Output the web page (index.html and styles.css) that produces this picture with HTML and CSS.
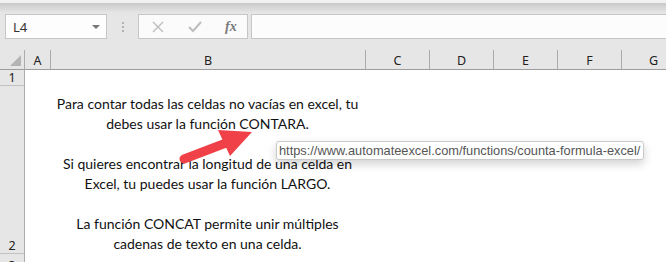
FILE: index.html
```html
<!DOCTYPE html>
<html lang="es">
<head>
    <meta charset="UTF-8">
    <title>Excel - hipervínculo</title>
    <link rel="stylesheet" href="styles.css">
</head>
<body>
    <div class="app">
        <div class="top-strip"></div>
        <div class="formula-row">
            <div class="namebox">
                <span>L4</span>
                <span class="caret"></span>
            </div>
            <div class="grip"><i></i><i></i><i></i></div>
            <div class="fx-buttons">
                <svg class="btn-icon" width="12" height="12" viewBox="0 0 12 12"><path d="M1 1 L11 11 M11 1 L1 11" stroke="#bdbdbd" stroke-width="1.4" fill="none"/></svg>
                <svg class="btn-icon" width="14" height="12" viewBox="0 0 14 12"><path d="M1 6 L5 10 L13 1" stroke="#bdbdbd" stroke-width="2" fill="none"/></svg>
                <span class="fx">fx</span>
            </div>
            <div class="formula-input"></div>
        </div>

        <div class="sheet">
            <div class="hdr corner"><span class="tri"></span></div>
            <div class="hdr col">A</div>
            <div class="hdr col">B</div>
            <div class="hdr col">C</div>
            <div class="hdr col">D</div>
            <div class="hdr col">E</div>
            <div class="hdr col">F</div>
            <div class="hdr col last">G</div>

            <div class="rowhdr r1">1</div>
            <div class="cell r1 full"></div>

            <div class="rowhdr r2">2</div>
            <div class="cell r2"></div>
            <div class="cell r2 text-cell">
                <p>Para contar todas las celdas no vacías en excel, tu<br>debes usar la función CONTARA.<br><br>Si quieres encontrar la longitud de una celda en<br>Excel, tu puedes usar la función LARGO.<br><br>La función CONCAT permite unir múltiples<br>cadenas de texto en una celda.</p>
            </div>
            <div class="cell r2 rest"></div>

            <div class="rowhdr r3">3</div>
            <div class="cell r3 full"></div>
        </div>

        <!-- flecha roja sobre la celda -->
        <svg class="arrow" width="90" height="50" viewBox="0 0 90 50">
            <line x1="8" y1="43" x2="50" y2="27" stroke="#ef4147" stroke-width="9" stroke-linecap="round"/>
            <polygon points="42,14 76,16 54,40" fill="#ef4147"/>
        </svg>

        <div class="tooltip">https://www.automateexcel.com/functions/counta-formula-excel/</div>
    </div>
</body>
</html>
```

FILE: styles.css
```css
* {
    margin: 0;
    padding: 0;
    box-sizing: border-box;
}
body {
    width: 666px;
    height: 262px;
    overflow: hidden;
    background: #e6e6e6;
    font-family: 'Noto Sans', sans-serif;
}
.app {
    position: relative;
    width: 666px;
    height: 262px;
    overflow: hidden;
}
.top-strip {
    height: 14px;
    background: linear-gradient(#f2f1ef 0, #f2f1ef 3px, #c9c9c9 3px, #e6e6e6 13px);
}

/* barra de fórmulas */
.formula-row {
    display: flex;
    align-items: center;
    height: 25px;
    padding-left: 5px;
}
.namebox {
    width: 102px;
    height: 25px;
    background: #fdfdfd;
    border: 1px solid #c6c6c6;
    display: flex;
    align-items: center;
    justify-content: space-between;
    padding: 0 6px 0 7px;
    font-size: 13px;
    color: #333;
}
.caret {
    width: 0;
    height: 0;
    border-left: 4px solid transparent;
    border-right: 4px solid transparent;
    border-top: 4px solid #777;
}
.grip {
    width: 31px;
    display: flex;
    flex-direction: column;
    align-items: center;
    gap: 2px;
}
.grip i {
    display: block;
    width: 2px;
    height: 2px;
    background: #b3b3b3;
}
.fx-buttons {
    width: 110px;
    height: 25px;
    background: #fbfbfb;
    border: 1px solid #c6c6c6;
    display: flex;
    align-items: center;
    padding-left: 13px;
}
.fx-buttons .btn-icon + .btn-icon {
    margin-left: 24px;
}
.fx {
    margin-left: 23px;
    font-family: 'Liberation Serif', serif;
    font-style: italic;
    font-weight: bold;
    font-size: 14px;
    color: #7a7a7a;
}
.formula-input {
    flex: 1;
    height: 25px;
    margin-left: 3px;
    background: #fcfcfc;
    border: 1px solid #c6c6c6;
    border-right: none;
}

/* hoja */
.sheet {
    margin-top: 11px;
    display: grid;
    grid-template-columns: 25px 25px 315px 64px 64px 64px 64px 64px;
    grid-template-rows: 20px 16px 168px 20px;
}
.hdr {
    height: 20px;
    border-bottom: 1px solid #9d9d9d;
    background: #e6e6e6;
    display: flex;
    align-items: center;
    justify-content: center;
    font-size: 12.5px;
    color: #222;
    padding-top: 1px;
}
.hdr.col {
    border-left: 1px solid #acacac;
}
.corner {
    border-right: 1px solid #acacac;
    position: relative;
}
.corner + .col {
    border-left: none;
}
.tri {
    position: absolute;
    right: 3px;
    bottom: 3px;
    width: 0;
    height: 0;
    border-left: 11px solid transparent;
    border-bottom: 11px solid #b4b4b4;
}
.rowhdr {
    background: #e6e6e6;
    border-right: 1px solid #acacac;
    border-bottom: 1px solid #c2c2c2;
    display: flex;
    align-items: flex-end;
    justify-content: center;
    font-size: 12.5px;
    color: #222;
    line-height: 15px;
}
.cell {
    background: #fff;
}
.full {
    grid-column: 2 / -1;
}
.rest {
    grid-column: 4 / -1;
}
.text-cell {
    display: flex;
    align-items: flex-end;
    justify-content: center;
}
.text-cell p {
    font-family: 'Lato', sans-serif;
    font-size: 14px;
    line-height: 20px;
    color: #111;
    text-align: center;
    white-space: nowrap;
}

/* elementos superpuestos */
.arrow {
    position: absolute;
    left: 176px;
    top: 116px;
}
.tooltip {
    position: absolute;
    left: 276px;
    top: 141px;
    width: 368px;
    height: 19px;
    background: #fff;
    border: 1px solid #c9c9c9;
    border-radius: 3px;
    box-shadow: 0 4px 10px rgba(0, 0, 0, 0.18);
    font-family: 'Liberation Sans', sans-serif;
    font-size: 12.8px;
    line-height: 17px;
    color: #555;
    padding-left: 2px;
    white-space: nowrap;
}
```
